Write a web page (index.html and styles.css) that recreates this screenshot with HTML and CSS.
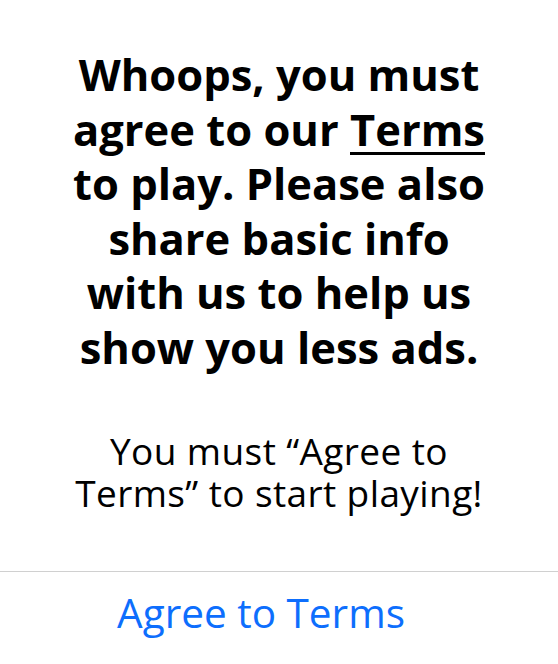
FILE: index.html
```html
<!DOCTYPE html>
<html lang="en">
<head>
<meta charset="utf-8">
<title>Agree to Terms</title>
<link rel="stylesheet" href="styles.css">
</head>
<body>
<div class="dialog">
  <div class="content">
    <h1 class="title">Whoops, you must agree to our <a class="terms-link" href="#">Terms</a> to play. Please also share basic info with us to help us show you less ads.</h1>
    <p class="message">You must “Agree to Terms” to start playing!</p>
  </div>
  <div class="footer">
    <button class="agree-btn" type="button">Agree to Terms</button>
  </div>
</div>
</body>
</html>
```
FILE: styles.css
```css
html, body {
  margin: 0;
  padding: 0;
  background: #ffffff;
}
body {
  font-family: "Open Sans", "Noto Sans", sans-serif;
  color: #000;
}
.dialog {
  width: 558px;
  height: 664px;
  display: flex;
  flex-direction: column;
}
.content {
  flex: 1;
  display: flex;
  flex-direction: column;
  align-items: center;
  padding-top: 48px;
}
.title {
  margin: 0;
  width: 425px;
  font-size: 43.5px;
  line-height: 54.5px;
  font-weight: 700;
  text-align: center;
}
.terms-link {
  color: #000;
  text-decoration: underline;
  text-decoration-thickness: 3px;
  text-underline-offset: 6px;
}
.message {
  margin: 55px 0 0;
  width: 440px;
  font-size: 37px;
  line-height: 42px;
  letter-spacing: 0.4px;
  text-align: center;
  font-weight: 400;
}
.footer {
  height: 93px;
  border-top: 1px solid #d0d0d0;
  padding: 0 36px 12px 0;
  box-sizing: border-box;
  display: flex;
  align-items: center;
  justify-content: center;
}
.agree-btn {
  background: none;
  border: 0;
  padding: 0;
  font-family: "Open Sans", "Noto Sans", sans-serif;
  font-size: 40.5px;
  color: #0d6efd;
  cursor: pointer;
}
```
